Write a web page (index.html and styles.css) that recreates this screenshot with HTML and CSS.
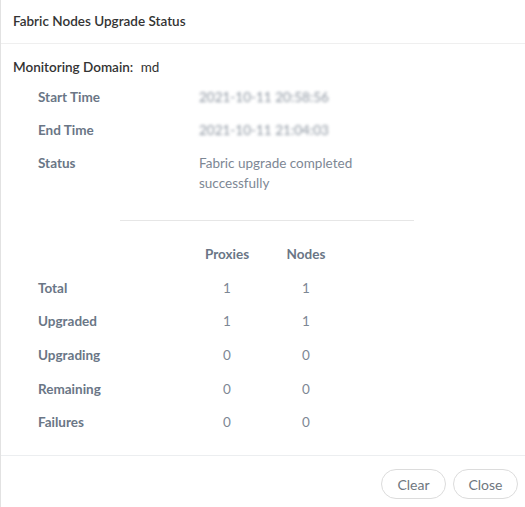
FILE: index.html
```html
<!DOCTYPE html>
<html lang="en">
<head>
  <meta charset="UTF-8" />
  <meta name="viewport" content="width=device-width, initial-scale=1.0"/>
  <title>Fabric Nodes Upgrade Status</title>
  <link rel="stylesheet" href="styles.css">
</head>
<body>
  <div class="modal">
    <div class="modal-header">
      <h3>Fabric Nodes Upgrade Status</h3>
    </div>

    <div class="modal-body">
      <div class="domain">
        <span class="domain-label">Monitoring Domain:</span>
        <span class="domain-value">md</span>
      </div>

      <div class="details">
        <div class="detail-row">
          <span class="label">Start Time</span>
          <span class="value blurred">2021-10-11 20:58:56</span>
        </div>
        <div class="detail-row">
          <span class="label">End Time</span>
          <span class="value blurred">2021-10-11 21:04:03</span>
        </div>
        <div class="detail-row">
          <span class="label">Status</span>
          <span class="value status">Fabric upgrade completed successfully</span>
        </div>
      </div>

      <hr class="divider" />

      <div class="counts">
        <span></span>
        <span class="col-head">Proxies</span>
        <span class="col-head">Nodes</span>

        <span class="label">Total</span>
        <span class="num">1</span>
        <span class="num">1</span>

        <span class="label">Upgraded</span>
        <span class="num">1</span>
        <span class="num">1</span>

        <span class="label">Upgrading</span>
        <span class="num">0</span>
        <span class="num">0</span>

        <span class="label">Remaining</span>
        <span class="num">0</span>
        <span class="num">0</span>

        <span class="label">Failures</span>
        <span class="num">0</span>
        <span class="num">0</span>
      </div>
    </div>

    <div class="modal-footer">
      <button type="button">Clear</button>
      <button type="button">Close</button>
    </div>
  </div>
</body>
</html>
```

FILE: styles.css
```css
* {
  box-sizing: border-box;
}

body {
  font-family: 'Lato', 'Noto Sans', sans-serif;
  font-size: 13.5px;
  margin: 0;
  padding: 0;
  background: #fff;
}

.modal {
  height: 507px;
  display: flex;
  flex-direction: column;
  border-left: 1px solid #e2e2e2;
  background: #fff;
}

.modal-header {
  height: 44px;
  display: flex;
  align-items: center;
  padding: 0 12px 2px;
  border-bottom: 1px solid #efefef;
}

.modal-header h3 {
  margin: 0;
  font-size: 13.5px;
  font-weight: 600;
  color: #333;
}

.modal-body {
  padding: 13px 12px 0;
}

.domain {
  line-height: 20px;
  color: #333;
}

.domain-label {
  font-weight: 600;
  margin-right: 4px;
}

.details {
  margin-top: 10px;
  padding-left: 25px;
  display: flex;
  flex-direction: column;
  gap: 13px;
}

.detail-row {
  display: grid;
  grid-template-columns: 161px 180px;
  line-height: 20px;
}

.label {
  font-weight: 700;
  color: #6a7686;
}

.value {
  color: #7d8794;
}

.blurred {
  color: #8c95a0;
  filter: blur(1.4px);
}

.divider {
  width: 294px;
  margin: 27px 0 0 107px;
  border: none;
  border-top: 1px solid #e6e6e6;
}

.counts {
  margin-top: 23px;
  padding-left: 25px;
  display: grid;
  grid-template-columns: 150px 78px 80px;
  row-gap: 13.7px;
  line-height: 20px;
}

.col-head {
  text-align: center;
  font-weight: 700;
  color: #6a7686;
}

.num {
  text-align: center;
  color: #7d8794;
}

.modal-footer {
  margin-top: auto;
  height: 52px;
  border-top: 1px solid #eceef0;
  display: flex;
  justify-content: flex-end;
  align-items: flex-start;
  gap: 7px;
  padding: 13px 7px 0;
}

.modal-footer button {
  width: 65px;
  height: 30px;
  border: 1px solid #dcdcdc;
  border-radius: 15px;
  background: #fff;
  font-family: inherit;
  font-size: 14px;
  color: #6f7780;
  cursor: pointer;
}
```
